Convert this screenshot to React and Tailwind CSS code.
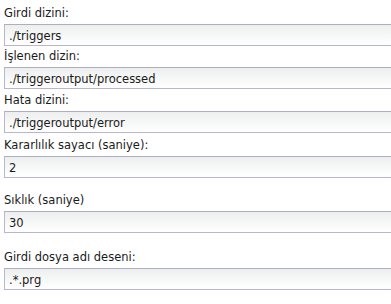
import React from 'react';

const fields = [
  { label: 'Girdi dizini:', value: './triggers', mt: 'mt-[6px]' },
  { label: 'İşlenen dizin:', value: './triggeroutput/processed', mt: 'mt-[3px]' },
  { label: 'Hata dizini:', value: './triggeroutput/error', mt: 'mt-[4px]' },
  { label: 'Kararlılık sayacı (saniye):', value: '2', mt: 'mt-[5px]' },
  { label: 'Sıklık (saniye)', value: '30', mt: 'mt-[15px]' },
  { label: 'Girdi dosya adı deseni:', value: '.*.prg', mt: 'mt-[17px]' },
];

function Field({ label, value, mt }) {
  return (
    <div className={mt}>
      <div className="h-[14px] leading-[14px] mb-[4px] whitespace-nowrap">{label}</div>
      <div className="h-[22px] w-[420px] border border-[#b9b7cb] border-t-[#adadc3] bg-gradient-to-b from-[#edefef] to-white pl-[4px] leading-[20px] pt-[1px] whitespace-nowrap">
        {value}
      </div>
    </div>
  );
}

export default function App() {
  return (
    <div
      className="w-[391px] h-[304px] overflow-hidden bg-white pl-[4px] text-[11.5px] text-[#1a1a1a]"
      style={{ fontFamily: '"DejaVu Sans", Verdana, sans-serif' }}
    >
      {fields.map((f) => (
        <Field key={f.label} {...f} />
      ))}
    </div>
  );
}
